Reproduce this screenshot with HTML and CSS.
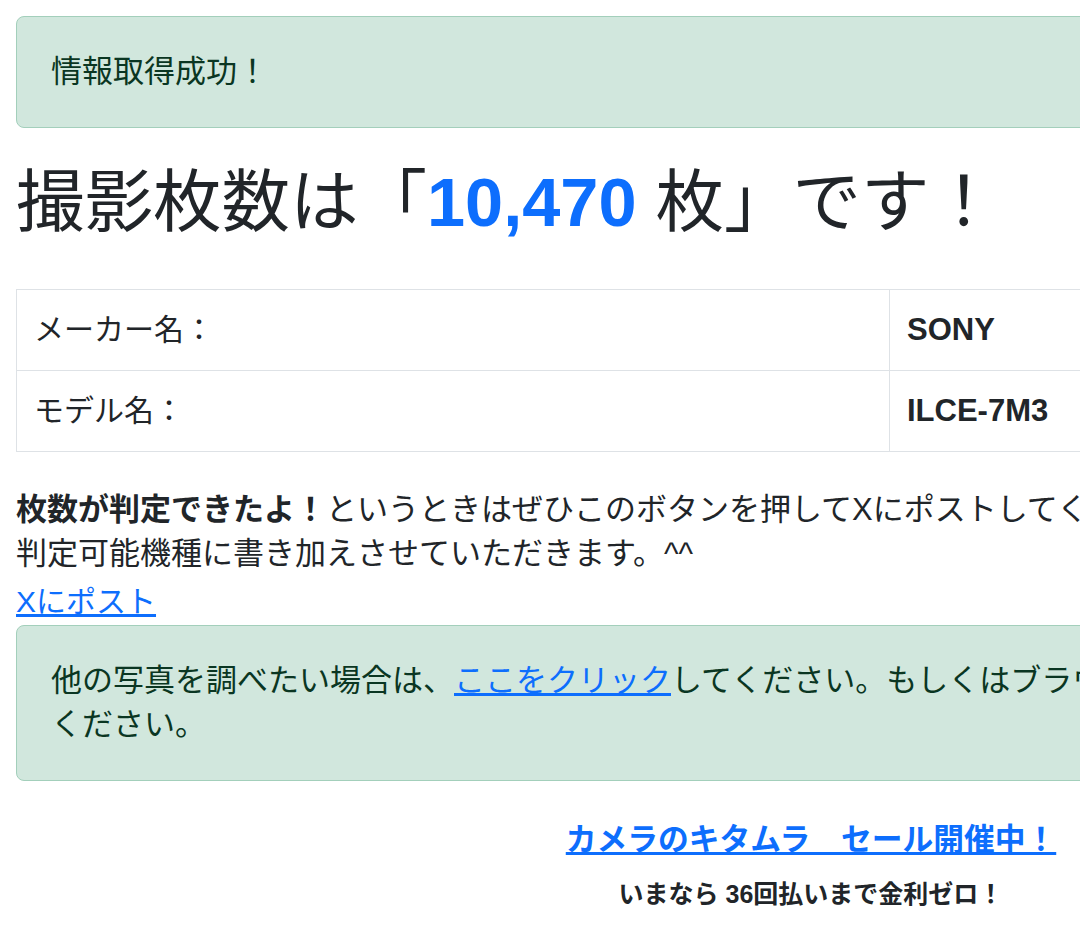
FILE: index.html
```html
<!DOCTYPE html>
<html lang="ja">
<head>
<meta charset="utf-8">
<title>撮影枚数判定結果</title>
<link rel="stylesheet" href="styles.css">
</head>
<body>
<div class="container">
  <div class="alert alert-top">情報取得成功！</div>

  <h1 class="count-title">撮影枚数は「<span class="count-num">10,470</span> 枚」です！</h1>

  <table class="info-table">
    <tr>
      <td class="label-cell">メーカー名：</td>
      <td class="value-cell">SONY</td>
    </tr>
    <tr>
      <td class="label-cell">モデル名：</td>
      <td class="value-cell">ILCE-7M3</td>
    </tr>
  </table>

  <p class="note"><strong>枚数が判定できたよ！</strong>というときはぜひこのボタンを押してXにポストしてください。<br>判定可能機種に書き加えさせていただきます。^^</p>
  <div class="post-line"><a href="#" class="link">Xにポスト</a></div>

  <div class="alert alert-other">他の写真を調べたい場合は、<a href="#" class="link">ここをクリック</a>してください。もしくはブラウザの戻るボタンで戻って<br>ください。</div>

  <div class="promo">
    <a href="#" class="promo-link">カメラのキタムラ　セール開催中！</a>
    <p class="promo-sub">いまなら 36回払いまで金利ゼロ！</p>
  </div>
</div>
</body>
</html>
```

FILE: styles.css
```css
html, body {
  overflow: hidden;
}
body {
  margin: 0;
  background: #ffffff;
  color: #212529;
  font-family: "Liberation Sans", "Noto Sans CJK JP", sans-serif;
}
.container {
  width: 1590px;
  padding: 16px 16px 0;
}
.alert {
  background: #d1e7dd;
  border: 1px solid #a3cfbb;
  border-radius: 8px;
  color: #0a3622;
  font-size: 31px;
  line-height: 44px;
  padding: 33px 34px;
}
.alert-top {
  margin: 0;
}
.count-title {
  margin: 35px 0 46px;
  font-size: 68.5px;
  line-height: 80px;
  font-weight: 400;
  color: #212529;
}
.count-num {
  color: #0d6efd;
  font-weight: 700;
}
.info-table {
  width: 100%;
  border-collapse: collapse;
  font-size: 30px;
  line-height: 46px;
}
.info-table td {
  border: 1px solid #dee2e6;
  padding: 17px 17px;
}
.label-cell {
  width: 838px;
}
.value-cell {
  font-weight: 700;
  font-size: 31px;
}
.note {
  margin: 36px 0 0;
  font-size: 31px;
  line-height: 44px;
}
.note strong {
  font-weight: 700;
}
.post-line {
  margin-top: 3px;
  font-size: 30px;
  line-height: 46px;
}
.link {
  color: #0d6efd;
  text-decoration: underline;
}
.alert-other {
  margin-top: 0;
}
.promo {
  margin-top: 36px;
  text-align: center;
}
.promo-link {
  display: inline-block;
  font-size: 30.75px;
  line-height: 45px;
  font-weight: 700;
  color: #0d6efd;
  text-decoration: underline;
}
.promo-sub {
  margin: 13px 0 0;
  font-size: 25px;
  line-height: 38px;
  font-weight: 700;
}
```
